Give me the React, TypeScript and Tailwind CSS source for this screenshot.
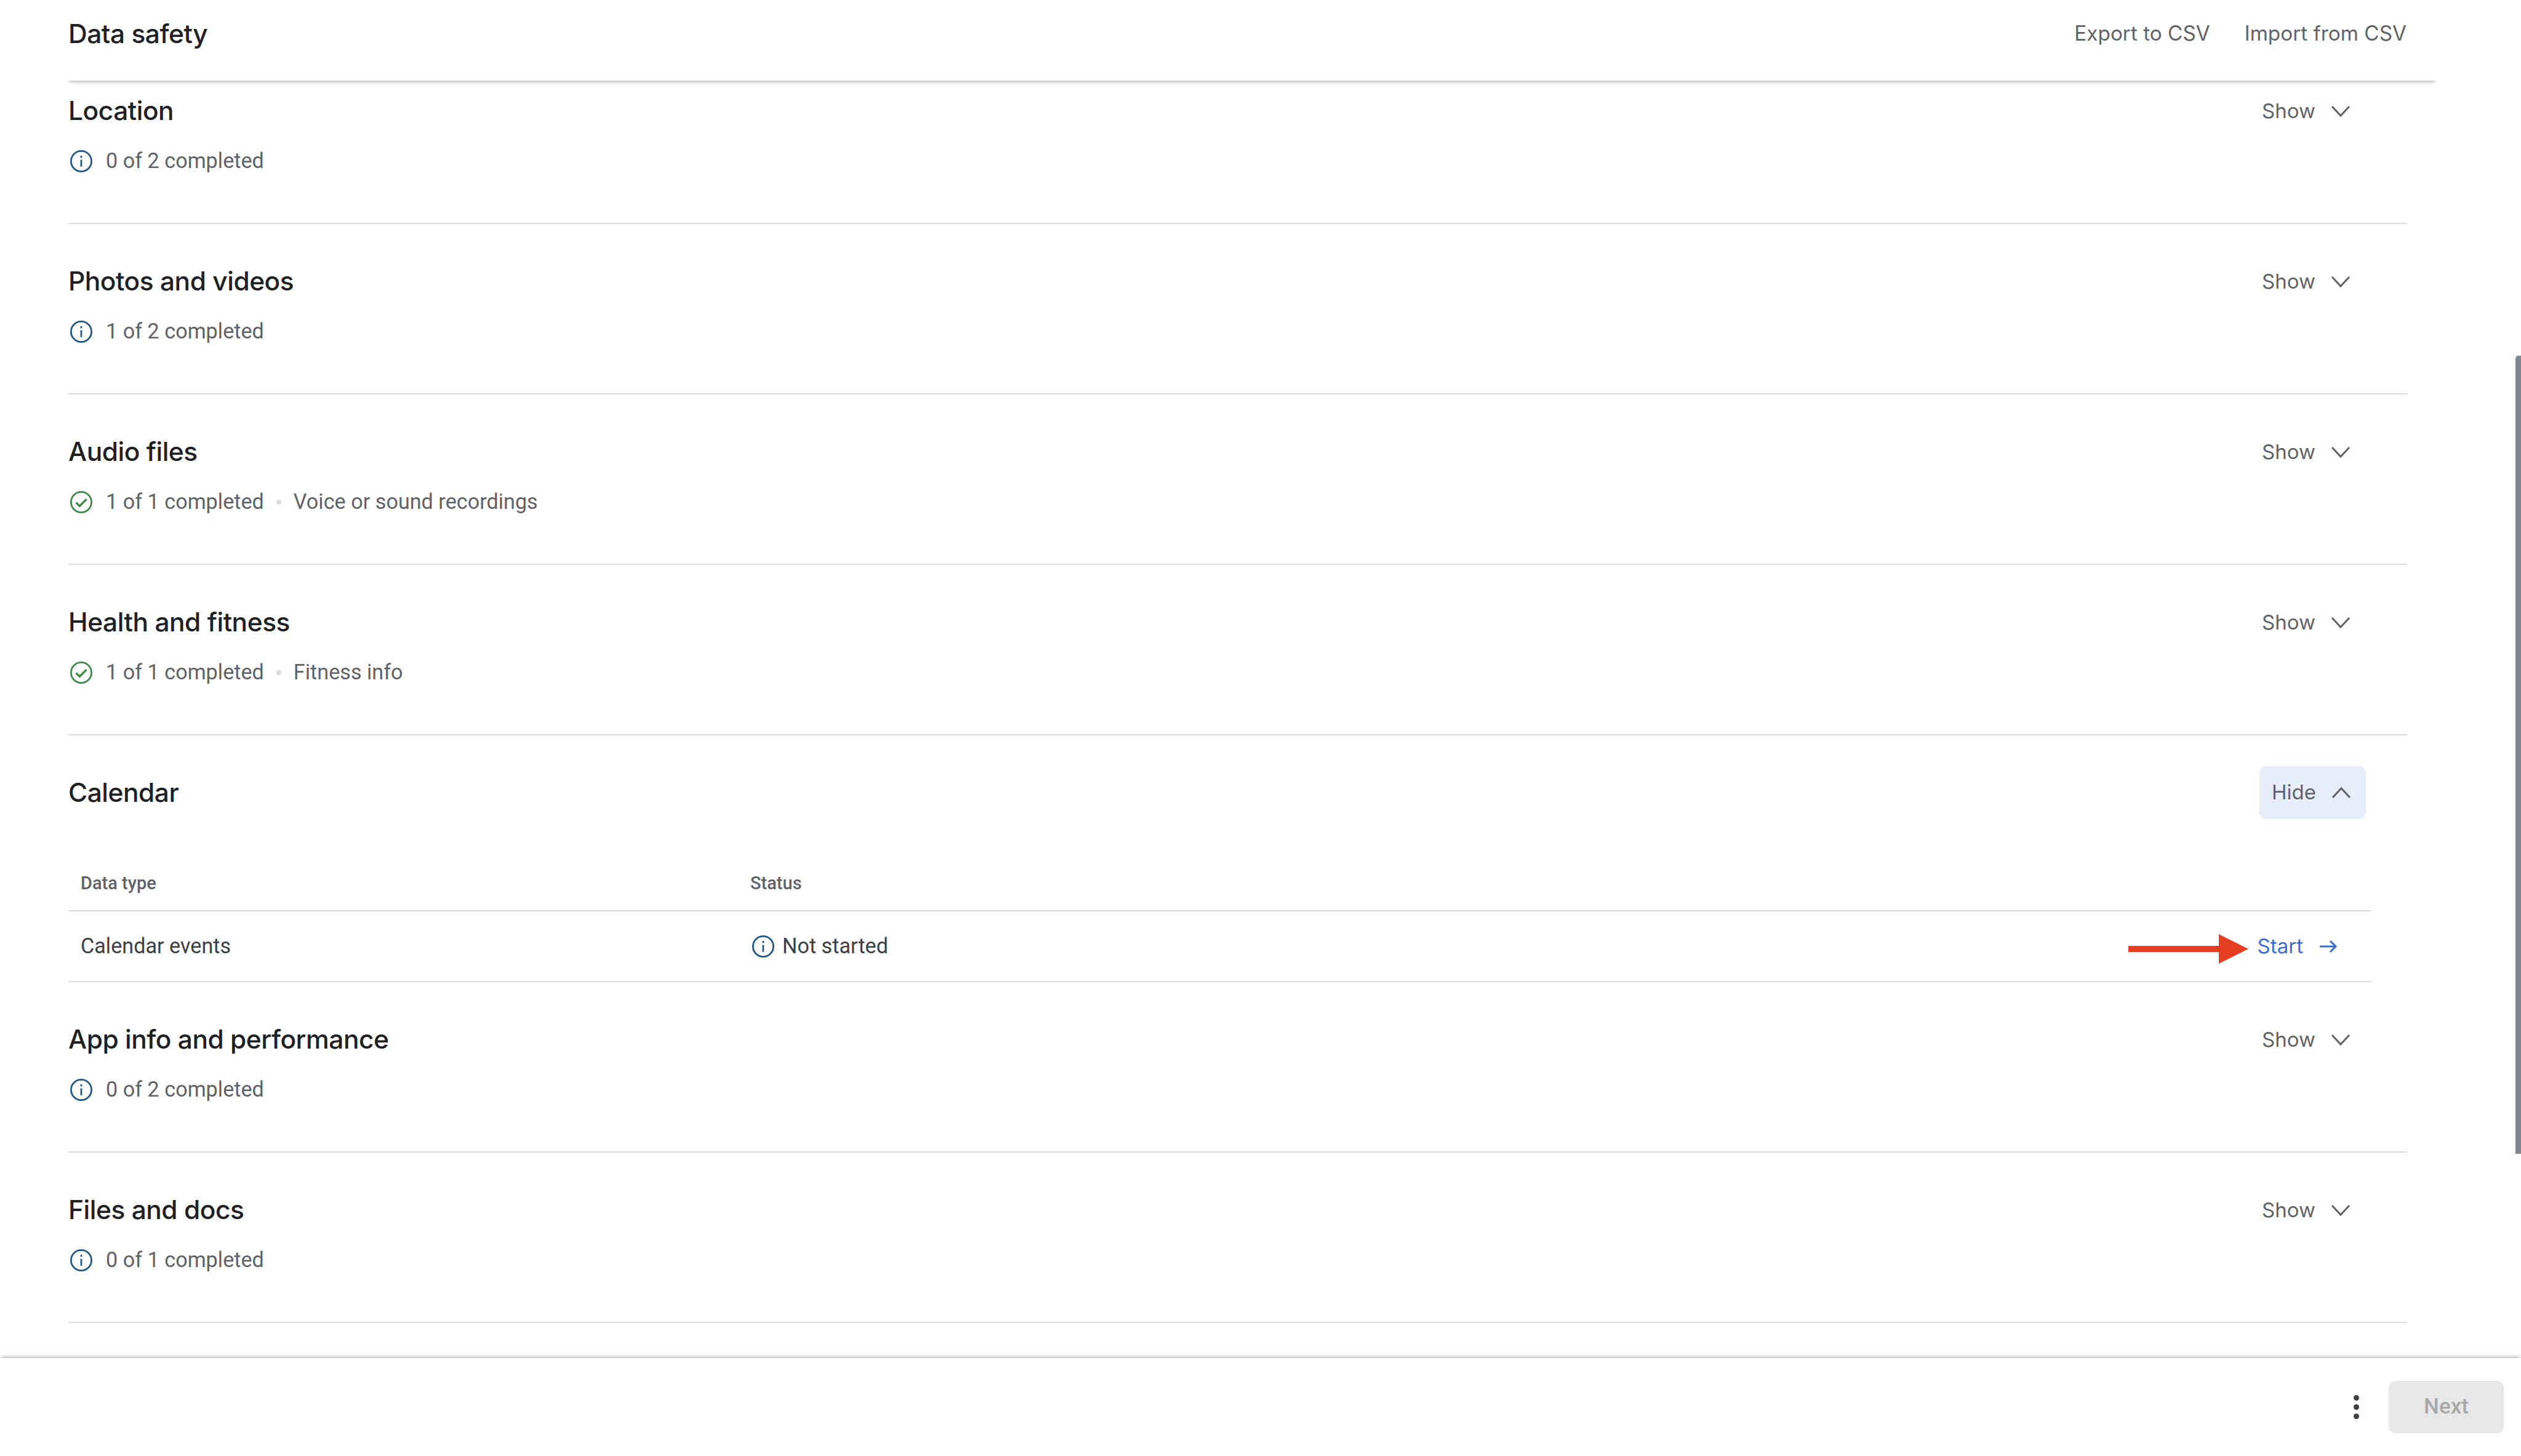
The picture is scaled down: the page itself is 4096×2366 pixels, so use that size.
const rows = [
	{title: 'Location', status: '0 of 2 completed', done: false},
	{title: 'Photos and videos', status: '1 of 2 completed', done: false},
	{title: 'Audio files', status: '1 of 1 completed', detail: 'Voice or sound recordings', done: true},
	{title: 'Health and fitness', status: '1 of 1 completed', detail: 'Fitness info', done: true}
]

const lowerRows = [
	{title: 'App info and performance', status: '0 of 2 completed', done: false},
	{title: 'Files and docs', status: '0 of 1 completed', done: false}
]

function InfoIcon() {
	return (
		<svg viewBox="0 0 24 24" className="h-[42px] w-[42px] shrink-0" fill="none">
			<circle cx="12" cy="12" r="9.5" stroke="#215a8a" strokeWidth="1.6" />
			<rect x="11.2" y="6.9" width="1.6" height="1.9" fill="#215a8a" />
			<rect x="11.2" y="10.6" width="1.6" height="6.4" fill="#215a8a" />
		</svg>
	)
}

function DoneIcon() {
	return (
		<svg viewBox="0 0 24 24" className="h-[42px] w-[42px] shrink-0" fill="none">
			<circle cx="12" cy="12" r="9.5" stroke="#3d8b47" strokeWidth="1.6" />
			<path d="M7.2 12.4l3.3 3.2 6.4-6.4" stroke="#3d8b47" strokeWidth="1.9" />
		</svg>
	)
}

function Chevron({up}: {up?: boolean}) {
	return (
		<svg viewBox="0 0 32 20" className={`h-[20px] w-[32px] ${up ? 'rotate-180' : ''}`} fill="none">
			<path d="M2 2l14 15L30 2" stroke="#5f6368" strokeWidth="3" />
		</svg>
	)
}

function Section({title, status, detail, done}: {title: string; status: string; detail?: string; done: boolean}) {
	return (
		<div className="h-[277px] border-b-2 border-[#dadce0] pt-[69px]">
			<div className="flex h-[48px] items-center justify-between">
				<h2 className="font-['Inter',sans-serif] text-[42.5px] font-medium tracking-[-0.5px] text-[#202124]">{title}</h2>
				<ShowButton />
			</div>
			<div className="mt-[34px] flex h-[48px] items-center font-['Roboto',sans-serif] text-[34.2px] text-[#5f6368]">
				{done ? <DoneIcon /> : <InfoIcon />}
				<span className="ml-[19px]">{status}</span>
				{detail && (
					<>
						<span className="mx-[20px] h-[8px] w-[8px] rounded-full bg-[#dadce0]" />
						<span>{detail}</span>
					</>
				)}
			</div>
		</div>
	)
}

function ShowButton() {
	return (
		<div className="mr-[92px] flex items-center pt-[1px] font-['Inter',sans-serif] text-[33px] text-[#5f6368]">
			<span className="w-[112px]">Show</span>
			<Chevron />
		</div>
	)
}

export default function App() {
	return (
		<div className="relative flex h-[2366px] w-[4096px] flex-col overflow-hidden bg-white">
			<header className="relative z-10 ml-[110px] flex h-[131px] w-[3848px] shrink-0 items-center justify-between bg-white pb-[22px] pl-[1px] pr-[48px] shadow-[0_4px_6px_-2px_rgba(60,64,67,0.4)] [clip-path:inset(0_0_-20px_0)]">
				<h1 className="font-['Inter',sans-serif] text-[42.5px] font-medium tracking-[-0.5px] text-[#202124]">Data safety</h1>
				<div className="flex gap-[56px] font-['Inter',sans-serif] text-[33.3px] text-[#5f6368]">
					<span>Export to CSV</span>
					<span>Import from CSV</span>
				</div>
			</header>

			<main className="-mt-[44px] ml-[111px] w-[3800px] flex-1">
				{rows.map((row) => (
					<Section key={row.title} {...row} />
				))}

				<div className="pt-[50px]">
					<div className="flex h-[86px] items-center justify-between">
						<h2 className="font-['Inter',sans-serif] text-[42.5px] font-medium tracking-[-0.5px] text-[#202124]">Calendar</h2>
						<div className="mr-[67px] flex h-[86px] w-[173px] items-center rounded-[11px] bg-[#e7eefa] pl-[20px] font-['Inter',sans-serif] text-[33px] text-[#5f6368]">
							<span className="w-[97px]">Hide</span>
							<Chevron up />
						</div>
					</div>
					<div className="mt-[64px] w-[3742px] font-['Roboto',sans-serif]">
						<div className="flex h-[86px] items-center border-b-2 border-[#dadce0] pb-[2px] pl-[20px] text-[29px] font-medium text-[#5f6368]">
							<span className="w-[1088px]">Data type</span>
							<span>Status</span>
						</div>
						<div className="relative flex h-[115px] items-center border-b-2 border-[#dadce0] pl-[20px] text-[34.2px] text-[#3c4043]">
							<span className="w-[1088px]">Calendar events</span>
							<InfoIcon />
							<span className="ml-[10px]">Not started</span>
							<span className="ml-auto mr-[55px] flex items-center font-['Inter',sans-serif] text-[33px] text-[#3a6fd0]">
								Start
								<svg viewBox="0 0 30 22" className="ml-[26px] h-[22px] w-[30px]" fill="none">
									<path d="M1 11h26M18 2l9 9-9 9" stroke="#3a6fd0" strokeWidth="3" />
								</svg>
							</span>
							{/* red callout arrow */}
							<div className="absolute left-[3347px] top-[37px] flex items-center">
								<div className="h-[10px] w-[147px] bg-[#e63e22]" />
								<div className="h-0 w-0 border-y-[24px] border-l-[48px] border-y-transparent border-l-[#e63e22]" />
							</div>
						</div>
					</div>
				</div>

				{lowerRows.map((row) => (
					<Section key={row.title} {...row} />
				))}
			</main>

			{/* scrollbar thumb */}
			<div className="absolute right-0 top-[578px] h-[1297px] w-[9px] rounded-tl-[5px] bg-[#80868b]" />

			<footer className="relative z-10 flex h-[159px] shrink-0 items-center justify-end bg-white pr-[28px] shadow-[0_-4px_6px_-2px_rgba(60,64,67,0.4)]">
				<div className="mr-[48px] flex flex-col gap-[5.5px]">
					<span className="h-[9.5px] w-[9.5px] rounded-full bg-[#3c4043]" />
					<span className="h-[9.5px] w-[9.5px] rounded-full bg-[#3c4043]" />
					<span className="h-[9.5px] w-[9.5px] rounded-full bg-[#3c4043]" />
				</div>
				<div className="flex h-[85px] w-[187px] items-center justify-center rounded-[11px] bg-[#e8e8e8] font-['Roboto',sans-serif] text-[35px] font-medium text-[#a8a8a8]">
					Next
				</div>
			</footer>
		</div>
	)
}
